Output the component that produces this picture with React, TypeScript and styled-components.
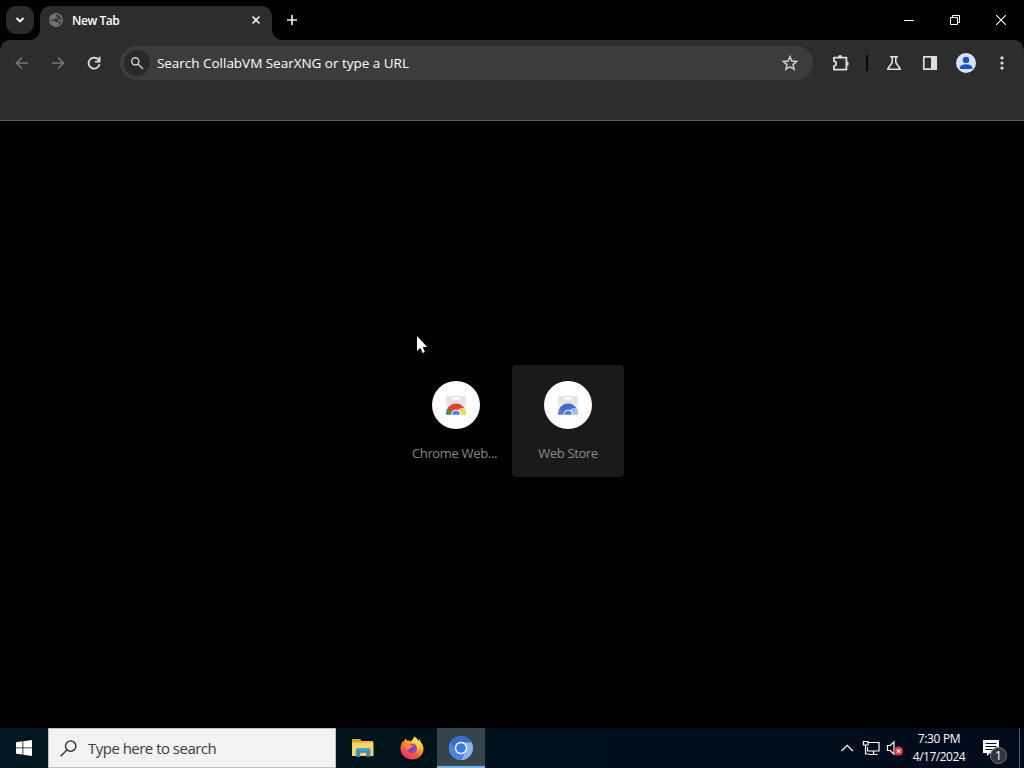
import React from 'react';
import styled, { createGlobalStyle } from 'styled-components';

const uiFont = "'Open Sans', 'Noto Sans', sans-serif";

const GlobalStyle = createGlobalStyle`
  html,
  body,
  #root {
    height: 100%;
  }

  body {
    margin: 0;
    background: #000;
    overflow: hidden;
    font-family: ${uiFont};
    cursor: default;
  }

  svg {
    display: block;
    flex: none;
  }
`;

const Desktop = styled.div`
  position: relative;
  display: flex;
  flex-direction: column;
  width: 1024px;
  height: 768px;
  overflow: hidden;
  background: #000;
`;

const Text = styled.span<{ $size: number; $spacing?: number; $weight?: number }>`
  font-size: ${(props) => props.$size}px;
  font-weight: ${(props) => props.$weight || 400};
  letter-spacing: ${(props) => props.$spacing || 0}px;
  line-height: 18px;
  white-space: nowrap;
`;

/* Tab strip */

const TabStrip = styled.div`
  display: flex;
  flex: none;
  height: 40px;
  padding-left: 6px;
  background: #000;
`;

const TabSearch = styled.div`
  display: flex;
  align-items: center;
  justify-content: center;
  width: 28px;
  height: 28px;
  margin-top: 6px;
  border-radius: 10px;
  background: #2c2c2c;
`;

const Tab = styled.div`
  position: relative;
  box-sizing: border-box;
  display: flex;
  align-items: center;
  width: 232px;
  height: 34px;
  margin: 6px 0 0 6px;
  padding: 0 10px 6px 8px;
  border-radius: 10px 10px 0 0;
  background: #2d2d2d;
  color: #fff;

  &::before,
  &::after {
    content: '';
    position: absolute;
    bottom: 0;
    width: 10px;
    height: 10px;
  }

  &::before {
    left: -10px;
    background: radial-gradient(circle at 0 0, transparent 9.5px, #2d2d2d 10px);
  }

  &::after {
    right: -10px;
    background: radial-gradient(circle at 100% 0, transparent 9.5px, #2d2d2d 10px);
  }
`;

const TabTitle = styled(Text)`
  flex: 1;
  margin: 2px 0 0 8px;
`;

const NewTab = styled.div`
  display: flex;
  align-items: center;
  justify-content: center;
  width: 28px;
  height: 28px;
  margin: 6px 0 0 6px;
`;

const WindowButtons = styled.div`
  display: flex;
  height: 40px;
  margin-left: auto;
`;

const WindowButton = styled.div`
  display: flex;
  align-items: center;
  justify-content: center;
  width: 46px;
`;

/* Toolbar */

const Toolbar = styled.div`
  box-sizing: border-box;
  display: flex;
  flex: none;
  align-items: flex-start;
  height: 81px;
  padding: 6px 4px 0;
  border-bottom: 1px solid #5c5c5c;
  border-radius: 10px 10px 0 0;
  background: #2d2d2d;
`;

const ToolButton = styled.div<{ $dim?: boolean }>`
  display: flex;
  align-items: center;
  justify-content: center;
  width: 36px;
  height: 34px;
  color: ${(props) => (props.$dim ? '#777' : '#dedede')};
`;

const Omnibox = styled.div`
  box-sizing: border-box;
  display: flex;
  align-items: center;
  width: 694px;
  height: 34px;
  margin: 0 9px 0 8px;
  padding: 0 15px 0 4px;
  border-radius: 17px;
  background: #3c3c3c;
  color: #fff;
`;

const SearchBadge = styled.div`
  display: flex;
  align-items: center;
  justify-content: center;
  width: 26px;
  height: 26px;
  border-radius: 50%;
  background: #292929;
`;

const OmniboxText = styled(Text)`
  flex: 1;
  margin-left: 7px;
`;

const Separator = styled.div`
  width: 2px;
  height: 16px;
  margin: 9px 8px 0;
  background: #080808;
`;

const Avatar = styled.div`
  display: flex;
  align-items: center;
  justify-content: center;
  width: 20px;
  height: 20px;
  border-radius: 50%;
  background: #d5e4fb;
`;

/* New tab page */

const Page = styled.div`
  display: flex;
  flex: 1;
  align-items: flex-start;
  justify-content: center;
  padding-top: 244px;
  background: #000;
`;

const Tile = styled.div<{ $active?: boolean }>`
  box-sizing: border-box;
  display: flex;
  flex-direction: column;
  align-items: center;
  width: 112px;
  height: 112px;
  padding-top: 16px;
  border-radius: 4px;
  background: ${(props) => (props.$active ? '#1a1a1a' : 'transparent')};
  color: #85898c;
`;

const TileIcon = styled.div`
  display: flex;
  align-items: center;
  justify-content: center;
  width: 48px;
  height: 48px;
  margin-bottom: 15px;
  border-radius: 50%;
  background: #fff;
`;

const TileLabel = styled(Text)<{ $truncated?: boolean }>`
  margin-right: ${(props) => (props.$truncated ? 3 : 0)}px;
`;

/* Taskbar */

const Taskbar = styled.div`
  display: flex;
  flex: none;
  height: 40px;
  background: linear-gradient(90deg, #00171f 0%, #00131b 45%, #000d1b 80%, #000a1b 100%);
  color: #fff;
`;

const TaskButton = styled.div<{ $active?: boolean }>`
  box-sizing: border-box;
  display: flex;
  align-items: center;
  justify-content: center;
  width: 48px;
  height: 40px;
  margin-right: 1px;
  padding-top: ${(props) => (props.$active ? 2 : 0)}px;
  border-bottom: ${(props) => (props.$active ? '2px solid #76b5e8' : 'none')};
  background: ${(props) => (props.$active ? '#37444c' : 'transparent')};
`;

const StartButton = styled(TaskButton)`
  margin: 0;
`;

const SearchBox = styled.div`
  box-sizing: border-box;
  display: flex;
  align-items: center;
  width: 288px;
  margin-right: 3px;
  padding-left: 11px;
  border: 1px solid #b9c1c4;
  background: #f2f2f2;
  color: #3b3b3b;
`;

const SearchText = styled(Text)`
  margin-left: 11px;
`;

const Tray = styled.div`
  display: flex;
  align-items: center;
  margin-left: auto;
`;

const Clock = styled.div`
  display: flex;
  flex-direction: column;
  align-items: center;
  width: 72px;
  margin-right: 8px;
`;

const Notifications = styled.div`
  position: relative;
  width: 36px;
  height: 40px;
  padding-top: 12px;
  box-sizing: border-box;
`;

const Badge = styled.div`
  position: absolute;
  left: 7px;
  top: 19px;
  box-sizing: border-box;
  width: 17px;
  height: 17px;
  border: 1px solid #74797f;
  border-radius: 50%;
  background: #30363e;
  font-size: 12px;
  line-height: 15px;
  text-align: center;
`;

const ShowDesktop = styled.div`
  width: 5px;
  height: 40px;
  box-sizing: border-box;
  border-left: 1px solid #56616b;
`;

const Cursor = styled.svg`
  position: absolute;
  left: 416px;
  top: 335px;
`;

const Globe = () => (
  <svg width="16" height="16" viewBox="0 0 16 16">
    <circle cx="8" cy="8" r="6.3" fill="#3b3b3b" stroke="#777" strokeWidth="1.2" />
    <path d="M2.2 6.5C3.2 3.4 5.8 2 8.8 2.2L7.4 4 9.5 5.2 8.6 6.4 6.3 6.3 5.3 7.7 2.2 7.9z" fill="#777" />
    <path d="M2.5 9.2 6.2 9.1 8.2 10.7 9.7 10.1 11 11.3 8.8 14C6 14 3.4 12 2.5 9.2zM10.2 7.2l3.6.8-1.5 1.8-2.3-.9z" fill="#777" />
  </svg>
);

type StoreIconProps = { left: string; top: string; right: string; center: string };

const StoreIcon = ({ left, top, right, center }: StoreIconProps) => (
  <svg width="24" height="24" viewBox="0 0 24 24">
    <path d="M2 3h20v18.8H2z" fill="#f1f1f1" />
    <path d="M2 3h20v8H2z" fill="#e4e4e4" />
    <path d="M8 4.5h8l-1 2H9z" fill="#fff" />
    <path d="M2 21.8c0-3 .7-5.600 2.400-7.500l4.400 7.500z" fill={left} />
    <path d="M3.800 14.700C8 9 16.300 9 20.200 14.700L15 17 7 21z" fill={top} />
    <path d="M14.500 15.800 20.300 14.700c1.400 2.100 1.800 4.500 1.700 7.100h-6z" fill={right} />
    <path d="M7.300 21.800c-.8-6.900 10.200-6.900 9.400 0z" fill="#fff" />
    <path d="M8.400 21.800c-1-5.400 8.200-5.400 7.200 0z" fill={center} />
  </svg>
);

const FolderIcon = () => (
  <svg width="22" height="20" viewBox="0 0 22 20">
    <path d="M0 1h8l1.500 2H21v15H0z" fill="#dfa139" />
    <path d="M0 4.500h21.500V18H0z" fill="#f6d46c" />
    <path d="M9.500 3H21v1.500H9.500z" fill="#efba47" />
    <path d="M4 18.800v-7l1.800-1.700h10.900l1.800 1.700v7h-4.200v-4.100H8.200v4.100z" fill="#3d8fb8" />
    <path d="M5.800 10.100h10.900v2.700H5.800z" fill="#4ba2c7" />
  </svg>
);

const FirefoxIcon = () => (
  <svg width="24" height="24" viewBox="0 0 24 24">
    <defs>
      <linearGradient id="fox" x1=".8" y1="0" x2=".2" y2="1">
        <stop offset="0" stopColor="#fff04b" />
        <stop offset=".35" stopColor="#ffad2e" />
        <stop offset=".65" stopColor="#ff593d" />
        <stop offset="1" stopColor="#ed2878" />
      </linearGradient>
    </defs>
    <path
      d="M14.200.5c2.300 1.200 3.500 2.800 4.100 4.500.4-.9.900-1.500 1.600-1.900.1 1.900.9 3 1.900 4.400 1.100 1.500 1.700 3.200 1.700 5.300C23.500 19 18.500 23.500 12 23.500S.5 18.800.5 12.600c0-3.200 1-5.700 2.400-7.700l.5 1.600C4 4.500 5.200 3 6.100 2.400l.5 2.300c2-.4 3.300.2 4.300.9C12 4.100 13.600 3 14.200.5z"
      fill="url(#fox)"
    />
    <path d="M7.200 10.200c1.300-2.700 6.700-3.700 8.900-.5 2.500 3.900-.7 7.600-4.300 7.600S6.300 14 7.200 10.200z" fill="#8448c5" />
    <path d="M4.200 7.100c2.800-.7 5.100.3 6.300 2 1 .2 2.200.1 2.800.5-.6 1.500-2.600 1.500-3.300 2.500-.5.800-1.200 1.500-2.600 1.800-2.300-1.500-3.400-4-3.200-6.800z" fill="#ff873a" />
    <path d="M14.300 1c-.8 2.200-2.200 3.100-3 4.700 3.500.2 6 2.900 6.300 5.700.1 1 0 1.900-.3 2.800 2.500-1.500 3.500-4.600 2.400-7.500L18.300 6c-.5-2.200-1.800-4-4-5z" fill="#ffdd3f" />
  </svg>
);

const ChromiumIcon = () => (
  <svg width="24" height="24" viewBox="0 0 24 24">
    <circle cx="12" cy="12" r="12" fill="#4b87e8" />
    <path d="M1.600 6A12 12 0 0 1 22.600 6.500H12L6.800 15z" fill="#3a6dcb" />
    <path d="M22.600 6.500A12 12 0 0 1 12 24L17.200 15 12 6.500z" fill="#8fb2ea" />
    <path d="M1.600 6 6.800 15A6 6 0 0 0 15.500 16.900L12 24A12 12 0 0 1 1.600 6z" fill="#4b85e2" />
    <circle cx="12" cy="12" r="6.200" fill="#fff" />
    <circle cx="12" cy="12" r="4.800" fill="#387be5" />
  </svg>
);

const App = () => {
  return (
    <React.Fragment>
      <GlobalStyle />
      <Desktop>
        <TabStrip>
          <TabSearch>
            <svg width="10" height="8" viewBox="0 0 10 8" fill="none" stroke="#fff" strokeWidth="1.8">
              <path d="M1.500 2 5 5.500 8.500 2" />
            </svg>
          </TabSearch>
          <Tab>
            <Globe />
            <TabTitle $size={12} $weight={600} $spacing={-0.45}>New Tab</TabTitle>
            <svg width="12" height="12" viewBox="0 0 12 12" stroke="#eee" strokeWidth="1.6">
              <path d="m2.500 2.500 7 7m0-7-7 7" />
            </svg>
          </Tab>
          <NewTab>
            <svg width="12" height="12" viewBox="0 0 12 12" stroke="#eee" strokeWidth="1.7">
              <path d="M6 1v10M1 6h10" />
            </svg>
          </NewTab>
          <WindowButtons>
            <WindowButton>
              <svg width="10" height="10" viewBox="0 0 10 10" stroke="#fff">
                <path d="M0 5.500h10" />
              </svg>
            </WindowButton>
            <WindowButton>
              <svg width="10" height="10" viewBox="0 0 10 10" fill="none" stroke="#fff">
                <path d="M.5 2.500h7v7h-7zM2.500 2.500v-2h7v7h-2" />
              </svg>
            </WindowButton>
            <WindowButton>
              <svg width="10" height="10" viewBox="0 0 10 10" stroke="#fff" strokeWidth="1.1">
                <path d="m0 0 10 10M10 0 0 10" />
              </svg>
            </WindowButton>
          </WindowButtons>
        </TabStrip>

        <Toolbar>
          <ToolButton $dim>
            <svg width="16" height="16" viewBox="0 0 16 16" fill="none" stroke="currentColor" strokeWidth="1.6">
              <path d="M14 8H3M8 2.500 2.500 8 8 13.500" />
            </svg>
          </ToolButton>
          <ToolButton $dim>
            <svg width="16" height="16" viewBox="0 0 16 16" fill="none" stroke="currentColor" strokeWidth="1.6">
              <path d="M2 8h11M8 2.500 13.500 8 8 13.500" />
            </svg>
          </ToolButton>
          <ToolButton>
            <svg width="16" height="16" viewBox="0 0 16 16" fill="none" stroke="currentColor" strokeWidth="1.8">
              <path d="M13.500 9.200A5.500 5.500 0 1 1 12.400 4.700L13.300 5.800M13.600 1.800v4.800H9" />
            </svg>
          </ToolButton>
          <Omnibox>
            <SearchBadge>
              <svg width="14" height="14" viewBox="0 0 14 14" fill="none" stroke="#c9c9c9" strokeWidth="1.5">
                <circle cx="5.300" cy="5.300" r="3.600" />
                <path d="m8 8 5 5" />
              </svg>
            </SearchBadge>
            <OmniboxText $size={13.5} $spacing={-0.02}>Search CollabVM SearXNG or type a URL</OmniboxText>
            <svg width="16" height="16" viewBox="0 0 16 16" fill="none" stroke="#d0d0d0" strokeWidth="1.5">
              <path d="m8 1.700 1.800 4.400 4.800.4-3.600 3.100 1.100 4.700L8 11.800l-4.100 2.500L5 9.600 1.400 6.500l4.800-.4z" />
            </svg>
          </Omnibox>
          <ToolButton>
            <svg width="18" height="18" viewBox="0 0 18 18" fill="none" stroke="currentColor" strokeWidth="1.8" strokeLinejoin="round">
              <path d="M2.900 3.600h12.500v12.100H2.900v-3.600c3-.2 3-4.800 0-5z" />
              <path d="M7.100 3a2 2 0 0 1 4 0zM15.800 7.700a2 2 0 0 1 0 4z" fill="currentColor" stroke="none" />
            </svg>
          </ToolButton>
          <Separator />
          <ToolButton>
            <svg width="18" height="18" viewBox="0 0 18 18" fill="none" stroke="currentColor" strokeWidth="1.6" strokeLinejoin="round">
              <path d="M5 2.700h8M7.200 3v5.500L2.600 15.200h12.800L10.800 8.500V3" />
            </svg>
          </ToolButton>
          <ToolButton>
            <svg width="16" height="16" viewBox="0 0 16 16">
              <path d="M1.800 1.800h12.400v12.400H1.800z" fill="none" stroke="currentColor" strokeWidth="1.7" strokeLinejoin="round" />
              <path d="M9 2h5v12H9z" fill="currentColor" />
            </svg>
          </ToolButton>
          <ToolButton>
            <Avatar>
              <svg width="14" height="14" viewBox="0 0 14 14" fill="#1f50c5">
                <circle cx="7" cy="3.900" r="3.200" />
                <path d="M.8 12.900V11.500C1.200 9.200 4 8.200 7 8.200s5.800 1 6.200 3.300v1.400z" />
              </svg>
            </Avatar>
          </ToolButton>
          <ToolButton>
            <svg width="4" height="16" viewBox="0 0 4 16" fill="currentColor">
              <circle cx="2" cy="2.900" r="1.600" />
              <circle cx="2" cy="8" r="1.600" />
              <circle cx="2" cy="13.100" r="1.600" />
            </svg>
          </ToolButton>
        </Toolbar>

        <Page>
          <Tile>
            <TileIcon>
              <StoreIcon left="#2c9c50" top="#df4135" right="#fbd151" center="#4286ec" />
            </TileIcon>
            <TileLabel $size={13} $spacing={-0.33} $truncated>Chrome Web...</TileLabel>
          </Tile>
          <Tile $active>
            <TileIcon>
              <StoreIcon left="#577bdb" top="#4168cc" right="#9fb9f4" center="#497ce1" />
            </TileIcon>
            <TileLabel $size={13} $spacing={-0.38}>Web Store</TileLabel>
          </Tile>
        </Page>

        <Taskbar>
          <StartButton>
            <svg width="16" height="16" viewBox="0 0 16 16" fill="#fff">
              <path d="M0 2.200 6.500 1.300v6.200H0zM7.300 1.200 16 0v7.500H7.300zM0 8.300h6.500v6.300L0 13.700zM7.300 8.300H16V16l-8.700-1.300z" />
            </svg>
          </StartButton>
          <SearchBox>
            <svg width="17" height="17" viewBox="0 0 17 17" fill="none" stroke="#222" strokeWidth="1.3">
              <circle cx="10.700" cy="6.100" r="5.200" />
              <path d="M7 9.900.6 16.300" />
            </svg>
            <SearchText $size={15} $spacing={-0.52}>Type here to search</SearchText>
          </SearchBox>
          <TaskButton>
            <FolderIcon />
          </TaskButton>
          <TaskButton>
            <FirefoxIcon />
          </TaskButton>
          <TaskButton $active>
            <ChromiumIcon />
          </TaskButton>
          <Tray>
            <svg width="62" height="18" viewBox="0 0 62 18" fill="none" stroke="#fff" strokeWidth="1.2">
              <path d="m.5 12 5.700-5.700L11.900 12" />
              <path d="M27.500 3.500h10.500v8.500H26.500V8M32.500 12v3M28.500 15.500h8M22.500 2.500h4.500v3.500h-4.500zM24.500 6v9h4" />
              <path d="M46.500 6.500h2.700l3.800-3.600v12.200l-3.800-3.600h-2.700z" />
              <circle cx="57.500" cy="12" r="4.500" fill="#d83b43" stroke="none" />
              <path d="m55.800 10.300 3.400 3.400m0-3.400-3.400 3.400" />
            </svg>
            <Clock>
              <Text $size={12} $spacing={-0.35}>7:30 PM</Text>
              <Text $size={12} $spacing={-0.5}>4/17/2024</Text>
            </Clock>
            <Notifications>
              <svg width="16" height="17" viewBox="0 0 16 17">
                <path d="M0 0h16v13H7l-3 3v-3H0z" fill="#fff" />
                <path d="M2.500 3.500h11m-11 3h11m-11 3h7" stroke="#001020" />
              </svg>
              <Badge>1</Badge>
            </Notifications>
            <ShowDesktop />
          </Tray>
        </Taskbar>

        <Cursor width="12" height="20" viewBox="0 0 12 20">
          <path d="M1 1v15l3.400-3.200 2.200 5.100 2.300-1-2.200-4.900h4.500z" fill="#fff" />
        </Cursor>
      </Desktop>
    </React.Fragment>
  );
};

export default App;
